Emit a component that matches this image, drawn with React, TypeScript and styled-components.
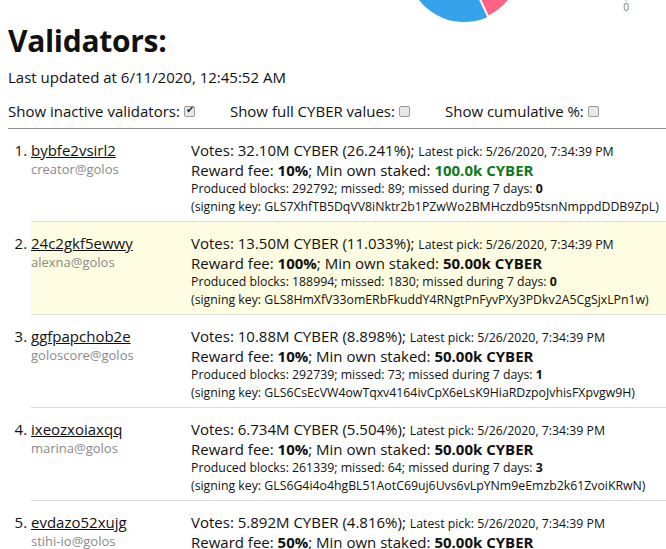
import React from 'react';
import styled, { createGlobalStyle } from 'styled-components';

const GlobalStyle = createGlobalStyle`
  html, body {
    margin: 0;
    padding: 0;
    background: #fff;
  }
  body {
    margin: 0 0 0 8px;
    font-family: "Open Sans", "Noto Sans", sans-serif;
    color: #111;
    overflow: hidden;
  }
`;

const ChartStrip = styled.div`
  height: 22px;
  overflow: hidden;

  svg {
    display: block;
  }
`;

const Title = styled.h1`
  margin: 0;
  font-size: 30px;
  line-height: 38px;
  font-weight: 700;
  letter-spacing: -0.3px;
`;

const Updated = styled.div`
  margin-top: 7px;
  font-size: 15px;
  line-height: 20px;
`;

const Controls = styled.div`
  display: flex;
  gap: 35px;
  margin-top: 14px;
  font-size: 15px;
  line-height: 20px;
  padding-bottom: 7px;
  border-bottom: 1px solid #8f8f8f;
`;

const Toggle = styled.label`
  display: inline-flex;
  align-items: center;
  gap: 4px;
`;

const Check = styled.input`
  appearance: none;
  width: 11px;
  height: 11px;
  margin: 1px 0 0;
  border: 1px solid #9a9a9a;
  border-radius: 2px;
  background: #e8e8e8;
  position: relative;

  &:checked::after {
    content: '✔';
    position: absolute;
    left: 1px;
    top: -3px;
    font-size: 10px;
    color: #222;
  }
`;

const List = styled.ol`
  margin: 0;
  padding: 0 0 0 23px;
  list-style: decimal;
`;

const Item = styled.li<{ $hl?: boolean }>`
  padding: 12px 0 5px;
  border-bottom: 1px solid #dcdcdc;
  background: ${(p) => (p.$hl ? '#fffde1' : 'transparent')};
  font-size: 15px;
  line-height: 19px;

  &::marker {
    font-size: 15px;
  }
`;

const Row = styled.div`
  display: grid;
  grid-template-columns: 160px 1fr;
`;

const Who = styled.div`
  display: flex;
  flex-direction: column;
`;

const Name = styled.a`
  color: #111;
  text-decoration: underline;
  font-size: 15px;
  line-height: 19px;
  align-self: flex-start;
`;

const Owner = styled.span`
  color: #8a8a8a;
  font-size: 13px;
  line-height: 18px;
`;

const Info = styled.div`
  display: flex;
  flex-direction: column;
`;

const Big = styled.div`
  font-size: 15px;
  line-height: 19px;
  white-space: nowrap;
`;

const Small = styled.span<{ $block?: boolean }>`
  font-size: 12.3px;
  line-height: 18px;
  white-space: nowrap;
  display: ${(p) => (p.$block ? 'block' : 'inline')};
`;

const Strong = styled.b<{ $green?: boolean }>`
  font-weight: 700;
  color: ${(p) => (p.$green ? '#0d7a1c' : 'inherit')};
`;

type Validator = {
  name: string;
  owner: string;
  votes: string;
  pct: string;
  fee: string;
  staked: string;
  produced: number;
  missed: number;
  missed7: number;
  key: string;
  green?: boolean;
  hl?: boolean;
};

const validators: Validator[] = [
  {
    name: 'bybfe2vsirl2',
    owner: 'creator@golos',
    votes: '32.10M',
    pct: '26.241%',
    fee: '10%',
    staked: '100.0k CYBER',
    produced: 292792,
    missed: 89,
    missed7: 0,
    key: 'GLS7XhfTB5DqVV8iNktr2b1PZwWo2BMHczdb95tsnNmppdDDB9ZpL',
    green: true,
  },
  {
    name: '24c2gkf5ewwy',
    owner: 'alexna@golos',
    votes: '13.50M',
    pct: '11.033%',
    fee: '100%',
    staked: '50.00k CYBER',
    produced: 188994,
    missed: 1830,
    missed7: 0,
    key: 'GLS8HmXfV33omERbFkuddY4RNgtPnFyvPXy3PDkv2A5CgSjxLPn1w',
    hl: true,
  },
  {
    name: 'ggfpapchob2e',
    owner: 'goloscore@golos',
    votes: '10.88M',
    pct: '8.898%',
    fee: '10%',
    staked: '50.00k CYBER',
    produced: 292739,
    missed: 73,
    missed7: 1,
    key: 'GLS6CsEcVW4owTqxv4164ivCpX6eLsK9HiaRDzpoJvhisFXpvgw9H',
  },
  {
    name: 'ixeozxoiaxqq',
    owner: 'marina@golos',
    votes: '6.734M',
    pct: '5.504%',
    fee: '10%',
    staked: '50.00k CYBER',
    produced: 261339,
    missed: 64,
    missed7: 3,
    key: 'GLS6G4i4o4hgBL51AotC69uj6Uvs6vLpYNm9eEmzb2k61ZvoiKRwN',
  },
  {
    name: 'evdazo52xujg',
    owner: 'stihi-io@golos',
    votes: '5.892M',
    pct: '4.816%',
    fee: '50%',
    staked: '50.00k CYBER',
    produced: 255120,
    missed: 41,
    missed7: 0,
    key: 'GLS5u8BvT3pEaXq2MhRk7ZcWd9Nf4Ls6Yj1Hg8QrTx2Vb3Km7PzCw',
  },
];

function PieTail() {
  // bottom of the share pie, the rest is scrolled out of view
  const cx = 456;
  const cy = -35;
  const r = 57;
  const a1 = (-60 * Math.PI) / 180;
  const a2 = (65 * Math.PI) / 180;
  const p1 = [cx + r * Math.cos(a1), cy + r * Math.sin(a1)];
  const p2 = [cx + r * Math.cos(a2), cy + r * Math.sin(a2)];
  return (
    <svg width="666" height="22" viewBox="0 0 666 22">
      <circle cx={cx} cy={cy} r={r} fill="#36a2eb" />
      <path
        d={`M${cx} ${cy} L${p1[0]} ${p1[1]} A${r} ${r} 0 0 1 ${p2[0]} ${p2[1]} Z`}
        fill="#ff6384"
        stroke="#fff"
        strokeWidth="2"
      />
      <line x1="618" y1="0" x2="618" y2="2" stroke="#bbb" />
      <text x="618" y="11" fontSize="10" fill="#777" textAnchor="middle" fontFamily="Open Sans, sans-serif">
        0
      </text>
    </svg>
  );
}

export default function App() {
  return (
    <>
      <GlobalStyle />
      <ChartStrip>
        <PieTail />
      </ChartStrip>
      <Title>Validators:</Title>
      <Updated>Last updated at 6/11/2020, 12:45:52 AM</Updated>
      <Controls>
        <Toggle>
          Show inactive validators:
          <Check type="checkbox" defaultChecked />
        </Toggle>
        <Toggle>
          Show full CYBER values:
          <Check type="checkbox" />
        </Toggle>
        <Toggle>
          Show cumulative %:
          <Check type="checkbox" />
        </Toggle>
      </Controls>
      <List>
        {validators.map((v) => (
          <Item key={v.name} $hl={v.hl}>
            <Row>
              <Who>
                <Name href="#">{v.name}</Name>
                <Owner>{v.owner}</Owner>
              </Who>
              <Info>
                <Big>
                  Votes: {v.votes} CYBER ({v.pct});{' '}
                  <Small>Latest pick: 5/26/2020, 7:34:39 PM</Small>
                </Big>
                <Big>
                  Reward fee: <Strong>{v.fee}</Strong>; Min own staked:{' '}
                  <Strong $green={v.green}>{v.staked}</Strong>
                </Big>
                <Small $block>
                  Produced blocks: {v.produced}; missed: {v.missed}; missed during 7 days:{' '}
                  <Strong>{v.missed7}</Strong>
                </Small>
                <Small $block>(signing key: {v.key})</Small>
              </Info>
            </Row>
          </Item>
        ))}
      </List>
    </>
  );
}
